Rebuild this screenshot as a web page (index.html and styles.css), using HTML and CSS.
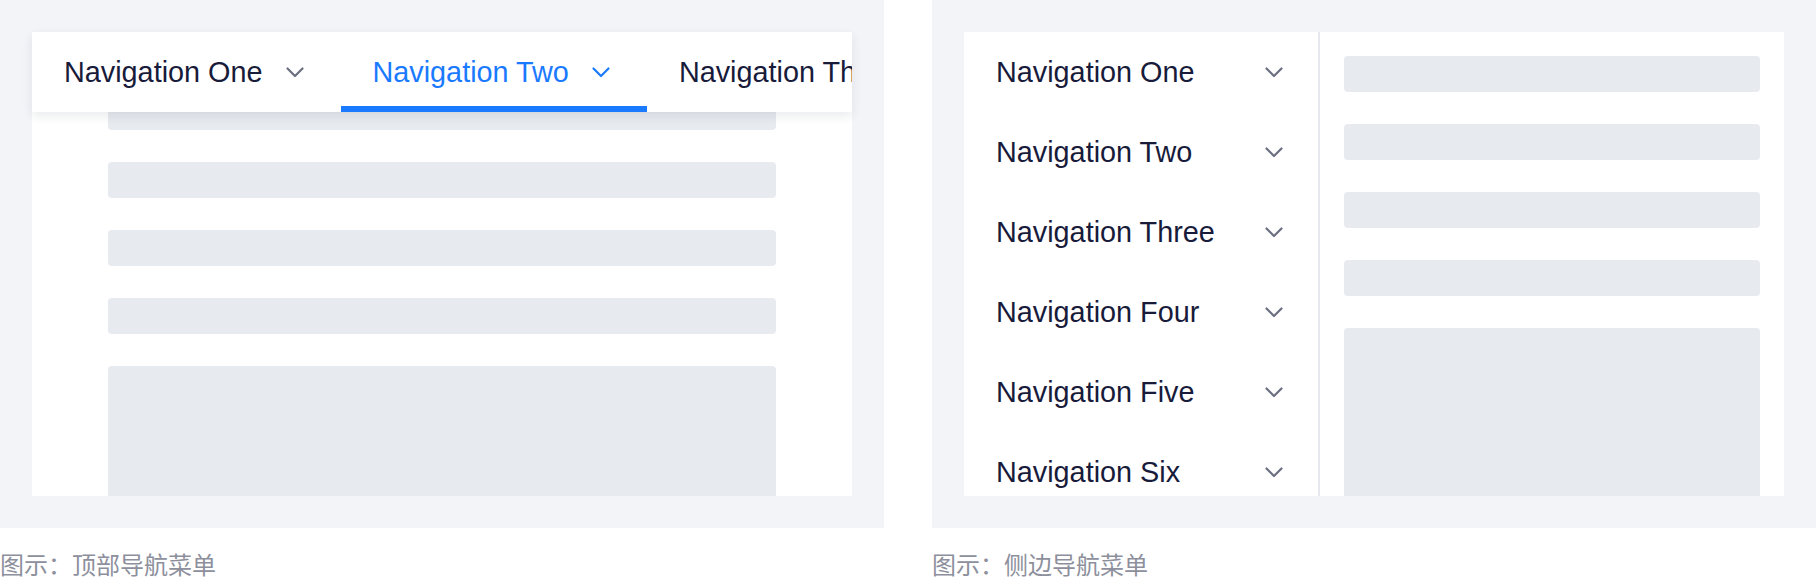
FILE: index.html
```html
<!DOCTYPE html>
<html lang="zh-CN">
<head>
<meta charset="utf-8">
<title>导航菜单示例</title>
<link rel="stylesheet" href="styles.css">
</head>
<body>
<div class="page">
  <figure class="demo">
    <div class="panel">
      <div class="card card-top">
        <nav class="topnav">
          <div class="topnav-item">
            <span class="label">Navigation One</span>
            <svg class="chev" viewBox="0 0 32 32"><polyline points="8.5,12.5 16,20 23.5,12.5"/></svg>
          </div>
          <div class="topnav-item active">
            <span class="label">Navigation Two</span>
            <svg class="chev" viewBox="0 0 32 32"><polyline points="8.5,12.5 16,20 23.5,12.5"/></svg>
          </div>
          <div class="topnav-item">
            <span class="label">Navigation Three</span>
            <svg class="chev" viewBox="0 0 32 32"><polyline points="8.5,12.5 16,20 23.5,12.5"/></svg>
          </div>
        </nav>
        <div class="content content-top">
          <div class="bar"></div>
          <div class="bar"></div>
          <div class="bar"></div>
          <div class="bar"></div>
          <div class="block"></div>
        </div>
      </div>
    </div>
    <figcaption class="caption">图示：顶部导航菜单</figcaption>
  </figure>

  <figure class="demo">
    <div class="panel">
      <div class="card card-side">
        <nav class="sidenav">
          <div class="sidenav-item"><span class="label">Navigation One</span><svg class="chev" viewBox="0 0 32 32"><polyline points="8.5,12.5 16,20 23.5,12.5"/></svg></div>
          <div class="sidenav-item"><span class="label">Navigation Two</span><svg class="chev" viewBox="0 0 32 32"><polyline points="8.5,12.5 16,20 23.5,12.5"/></svg></div>
          <div class="sidenav-item"><span class="label">Navigation Three</span><svg class="chev" viewBox="0 0 32 32"><polyline points="8.5,12.5 16,20 23.5,12.5"/></svg></div>
          <div class="sidenav-item"><span class="label">Navigation Four</span><svg class="chev" viewBox="0 0 32 32"><polyline points="8.5,12.5 16,20 23.5,12.5"/></svg></div>
          <div class="sidenav-item"><span class="label">Navigation Five</span><svg class="chev" viewBox="0 0 32 32"><polyline points="8.5,12.5 16,20 23.5,12.5"/></svg></div>
          <div class="sidenav-item"><span class="label">Navigation Six</span><svg class="chev" viewBox="0 0 32 32"><polyline points="8.5,12.5 16,20 23.5,12.5"/></svg></div>
        </nav>
        <div class="content content-side">
          <div class="bar"></div>
          <div class="bar"></div>
          <div class="bar"></div>
          <div class="bar"></div>
          <div class="block"></div>
        </div>
      </div>
    </div>
    <figcaption class="caption">图示：侧边导航菜单</figcaption>
  </figure>
</div>
</body>
</html>
```

FILE: styles.css
```css
* {
  box-sizing: border-box;
}

html, body {
  margin: 0;
  padding: 0;
  background: #ffffff;
}

body {
  font-family: "Liberation Sans", "Noto Sans CJK SC", sans-serif;
  color: #181b3a;
}

.page {
  display: flex;
  gap: 48px;
  width: 1816px;
}

.demo {
  margin: 0;
  width: 884px;
  flex-shrink: 0;
}

.panel {
  background: #f3f4f8;
  padding: 32px;
  height: 528px;
}

.card {
  background: #ffffff;
  width: 820px;
  height: 464px;
}

.card-top {
  position: relative;
}

/* top navigation */
.topnav {
  position: absolute;
  top: 0;
  left: 0;
  right: 0;
  height: 80px;
  background: #ffffff;
  display: flex;
  overflow: hidden;
  box-shadow: 0 4px 10px rgba(20, 30, 60, 0.09);
  z-index: 1;
}

.topnav-item {
  flex-shrink: 0;
  display: flex;
  align-items: center;
  gap: 16px;
  padding: 0 30px 0 32px;
  height: 80px;
  white-space: nowrap;
}

.label {
  font-size: 28.8px;
  line-height: 40px;
  white-space: nowrap;
}

.chev {
  width: 32px;
  height: 32px;
  flex-shrink: 0;
  fill: none;
  stroke: #6b6f80;
  stroke-width: 2.2;
  stroke-linecap: round;
  stroke-linejoin: round;
}

.topnav-item.active {
  color: #1a7aff;
  box-shadow: inset 0 -6px 0 #1a7aff;
}

.topnav-item.active .chev {
  stroke: #1a7aff;
}

/* content skeletons */
.content {
  display: flex;
  flex-direction: column;
  gap: 32px;
  overflow: hidden;
  height: 100%;
}

.content-top {
  padding: 62px 76px 0;
}

.content-side {
  flex: 1;
  padding: 24px 24px 0;
}

.bar {
  height: 36px;
  flex-shrink: 0;
  background: #e7eaef;
  border-radius: 4px;
}

.block {
  height: 240px;
  flex-shrink: 0;
  background: #e7eaef;
  border-radius: 4px;
}

/* side navigation */
.card-side {
  display: flex;
}

.sidenav {
  width: 356px;
  flex-shrink: 0;
  border-right: 2px solid #e6e8ed;
  overflow: hidden;
  height: 100%;
}

.sidenav-item {
  height: 80px;
  display: flex;
  align-items: center;
  justify-content: space-between;
  padding: 0 28px 0 32px;
}

/* captions */
.caption {
  margin-top: 20px;
  font-family: "Noto Sans CJK SC", sans-serif;
  font-size: 24px;
  line-height: 32px;
  color: #8d909c;
}
```
